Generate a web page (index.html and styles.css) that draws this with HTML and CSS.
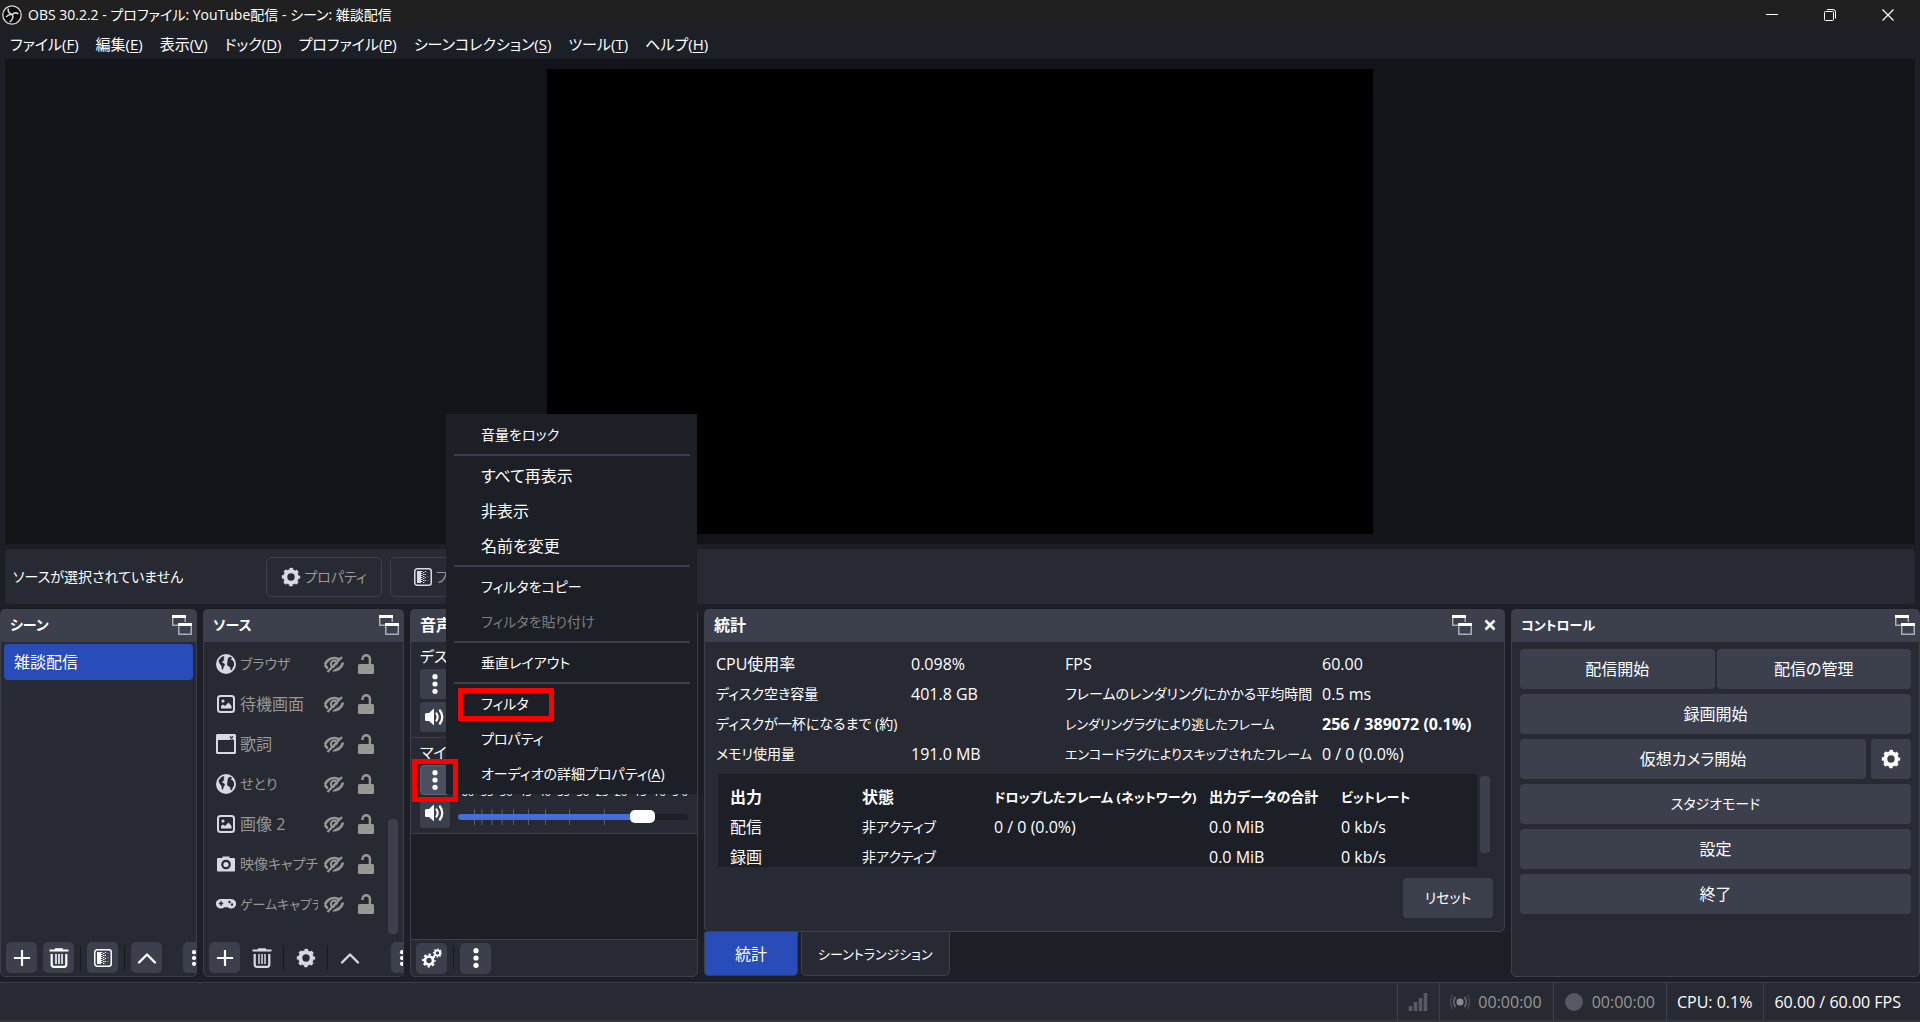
FILE: index.html
```html
<!DOCTYPE html>
<html lang="ja">
<head>
<meta charset="utf-8">
<title>OBS 30.2.2 - プロファイル: YouTube配信 - シーン: 雑談配信</title>
<link rel="stylesheet" href="styles.css">
</head>
<body>
<svg class="sprite" aria-hidden="true">
  <symbol id="popout" viewBox="0 0 20 20">
    <path d="M.75 3v7.250h5.250M13.250 3v4" fill="none" stroke="#a9acb4" stroke-width="1.500"/>
    <path d="M0 0h14v3H0zM6 8h14v3H6z" fill="#fff"/>
    <path d="M6.750 11v8.250h12.500V11" fill="none" stroke="#a9acb4" stroke-width="1.500"/>
  </symbol>
  <symbol id="gear" viewBox="0 0 20 20">
    <g fill="none" stroke="currentColor">
      <circle cx="10" cy="10" r="5.700" stroke-width="4"/>
      <circle cx="10" cy="10" r="8" stroke-width="2.400" stroke-dasharray="3.300 2.983" stroke-dashoffset="1.650"/>
    </g>
  </symbol>
  <symbol id="gears" viewBox="0 0 20 20">
    <g fill="none" stroke="currentColor">
      <circle cx="7" cy="12.500" r="4" stroke-width="2.700"/>
      <circle cx="7" cy="12.500" r="5.900" stroke-width="2" stroke-dasharray="2.400 2.234" stroke-dashoffset="1.200"/>
      <circle cx="15.500" cy="5" r="2.600" stroke-width="1.800"/>
      <circle cx="15.500" cy="5" r="3.900" stroke-width="1.300" stroke-dasharray="1.600 1.463" stroke-dashoffset=".8"/>
    </g>
  </symbol>
  <symbol id="filter" viewBox="0 0 20 20">
    <rect x="1.750" y="1.750" width="16.500" height="16.500" rx="2.500" fill="none" stroke="currentColor" stroke-width="1.500"/>
    <path d="M4 4h4v12H4z" fill="currentColor"/>
    <path d="M8.750 4v12M10.750 5v12" stroke="currentColor" stroke-width="1.500" stroke-dasharray="1 1" fill="none"/>
    <path d="M12.500 4v12" stroke="currentColor" stroke-width="1.200" stroke-dasharray="1 2" fill="none"/>
    <path d="M15 5v11" stroke="currentColor" stroke-width="1" stroke-dasharray="1 3" opacity=".5" fill="none"/>
  </symbol>
  <symbol id="globe" viewBox="0 0 20 20">
    <circle cx="10" cy="10" r="10" fill="currentColor"/>
    <path d="M2.500 6.500 5 3.500l2.500-1.500 1 1L7.500 5l1 1.200-2 1v1.500l1.700.8.8 1.500-1.500 2L7 16l-1.300-1.200-.2-2.800L3.500 9.500zM11.500 6l1-2.500 2-.8 1.500 1-1 1.800 1.500.8 1.500 2v3l-1 2-1 2.500-1.300.5-.7-3.300-1.500-.5-1.500-1.700.3-2z" fill="#272a33"/>
  </symbol>
  <symbol id="image" viewBox="0 0 20 20">
    <rect x="2" y="2" width="16" height="16" rx="2.500" fill="none" stroke="currentColor" stroke-width="2"/>
    <circle cx="7" cy="7" r="1.500" fill="currentColor"/>
    <path d="M5 14.500V12l2-1.500L9 12l3.500-3.500L15.500 12v2.500z" fill="currentColor"/>
  </symbol>
  <symbol id="window" viewBox="0 0 20 20">
    <path d="M1 0h18l1 1v18l-1 1H1l-1-1V1zM2 6v12h16V6z" fill="currentColor" fill-rule="evenodd"/>
    <path d="m14 2.500 3 3m0-3-3 3" stroke="#272a33" stroke-width="1.200"/>
  </symbol>
  <symbol id="camera" viewBox="0 0 20 20">
    <path d="M1 5q0-1 1-1h4.500V2.500h7V4H18q1 0 1 1v11.500q0 1-1 1H2q-1 0-1-1z" fill="currentColor"/>
    <circle cx="10" cy="10.500" r="3.700" fill="none" stroke="#272a33" stroke-width="2.200"/>
  </symbol>
  <symbol id="gamepad" viewBox="0 0 20 20">
    <path d="M5 5h10a5 4.800 0 1 1-3.300 8.300H8.300A5 4.800 0 1 1 5 5z" fill="currentColor"/>
    <path d="M5 7.300v4.400M2.800 9.500h4.400" stroke="#272a33" stroke-width="1.500"/>
    <path d="M13.500 8h.01M16 10.500h.01" stroke="#272a33" stroke-width="2.400" stroke-linecap="round"/>
  </symbol>
  <symbol id="hidden" viewBox="0 0 20 20">
    <path d="M1 10.500Q4 4 10 4q3.500 0 6 2M19 8.500Q17 16 8.500 16.500M1 10.500q.7 2.500 3 4" fill="none" stroke="currentColor" stroke-width="2.600"/>
    <circle cx="10" cy="10" r="3.200" fill="none" stroke="currentColor" stroke-width="2"/>
    <path d="M3.500 18 18 3" stroke="currentColor" stroke-width="2.400"/>
    <path d="M5.300 19.500 19.800 4.500" stroke="#272a33" stroke-width="1.400"/>
  </symbol>
  <symbol id="unlock" viewBox="0 0 16 20">
    <path d="M4.500 6V5a3.700 3.700 0 0 1 7.400 0v6" fill="none" stroke="currentColor" stroke-width="2.400"/>
    <rect y="10" width="16" height="10" rx="1.500" fill="currentColor"/>
  </symbol>
  <symbol id="plus" viewBox="0 0 20 20"><path d="M10 1v18M1 10h18" stroke="currentColor" stroke-width="2.400"/></symbol>
  <symbol id="trash" viewBox="0 0 20 20">
    <path d="M.5 2.500h19M6 1.200h8" stroke="currentColor" stroke-width="2"/>
    <path d="M2.700 6v10.500q0 2.300 2.300 2.300h10q2.300 0 2.300-2.300V6" fill="none" stroke="currentColor" stroke-width="2.200"/>
    <path d="M7 6v10M10 6v10M13 6v10" stroke="currentColor" stroke-width="1.500"/>
  </symbol>
  <symbol id="up" viewBox="0 0 20 20"><path d="m2 14.500 8-8 8 8" fill="none" stroke="currentColor" stroke-width="2.400" stroke-linecap="round" stroke-linejoin="round"/></symbol>
  <symbol id="dots" viewBox="0 0 20 20"><circle cx="10" cy="2.700" r="2.600" fill="currentColor"/><circle cx="10" cy="10" r="2.600" fill="currentColor"/><circle cx="10" cy="17.300" r="2.600" fill="currentColor"/></symbol>
  <symbol id="speaker" viewBox="0 0 20 20">
    <path d="M0 7.500Q0 6 1.500 6H4l5-4.500v17L4 14H1.500Q0 14 0 12.500z" fill="currentColor"/>
    <path d="M11.500 6.500q2.300 3.500 0 7M15 3.500q4.500 6.500 0 13" fill="none" stroke="currentColor" stroke-width="2.200" stroke-linecap="round"/>
  </symbol>
</svg>

<header class="titlebar">
  <svg class="logo" viewBox="0 0 20 20" aria-hidden="true">
    <circle cx="10" cy="10" r="9.200" fill="#0a0a0a" stroke="#d8d8d8" stroke-width="1.300"/>
    <path d="M6.200 3.500Q5.500 8.500 10.500 9.500M16.500 9q-3.500-2.500-6 .5 1.500 5-3 7.500M4 12q2.500-3 6.500-2.500" fill="none" stroke="#d8d8d8" stroke-width="1.500"/>
  </svg>
  <h1 class="title">OBS 30.2.2 - プロファイル: YouTube配信 - シーン: 雑談配信</h1>
  <div class="window-buttons">
    <button aria-label="最小化"><svg viewBox="0 0 12 12"><path d="M0 5.500h12" stroke="#fff"/></svg></button>
    <button aria-label="元に戻す"><svg viewBox="0 0 12 12"><rect x=".5" y="2.500" width="9" height="9" rx="1" fill="none" stroke="#fff"/><path d="M3 .5h6q2.500 0 2.500 2.500v6.500" fill="none" stroke="#fff"/></svg></button>
    <button aria-label="閉じる"><svg viewBox="0 0 12 12"><path d="m.5.5 11 11m0-11-11 11" stroke="#fff" stroke-width="1.200"/></svg></button>
  </div>
</header>

<nav class="menubar">
  <button>ファイル(<u>F</u>)</button>
  <button>編集(<u>E</u>)</button>
  <button>表示(<u>V</u>)</button>
  <button>ドック(<u>D</u>)</button>
  <button>プロファイル(<u>P</u>)</button>
  <button>シーンコレクション(<u>S</u>)</button>
  <button>ツール(<u>T</u>)</button>
  <button>ヘルプ(<u>H</u>)</button>
</nav>

<main class="workspace">
  <section class="preview" aria-label="プレビュー"><div class="canvas"></div></section>

  <section class="context-bar">
    <p class="context-label kana">ソースが選択されていません</p>
    <button class="outline-button kana" disabled><svg class="icon"><use href="#gear"/></svg>プロパティ</button>
    <button class="outline-button kana" disabled><svg class="icon"><use href="#filter"/></svg>フィルタ</button>
  </section>

  <div class="docks">
    <section class="dock">
      <header class="dock-header"><h2 class="kana">シーン</h2><button class="plain" aria-label="切り離す"><svg class="popout"><use href="#popout"/></svg></button></header>
      <div class="dock-body">
        <ul class="scene-list"><li class="selected">雑談配信</li></ul>
        <div class="toolbar">
          <button aria-label="追加"><svg class="glyph"><use href="#plus"/></svg></button>
          <button aria-label="削除"><svg class="icon"><use href="#trash"/></svg></button>
          <span class="divider"></span>
          <button aria-label="フィルタ"><svg class="icon"><use href="#filter"/></svg></button>
          <span class="divider"></span>
          <button aria-label="上へ"><svg class="icon"><use href="#up"/></svg></button>
          <button class="more" aria-label="その他"><svg class="dots"><use href="#dots"/></svg></button>
        </div>
      </div>
    </section>

    <section class="dock sources">
      <header class="dock-header"><h2 class="kana">ソース</h2><button class="plain" aria-label="切り離す"><svg class="popout"><use href="#popout"/></svg></button></header>
      <div class="dock-body">
        <div class="source-area">
          <ul class="source-list">
            <li><svg class="icon"><use href="#globe"/></svg><span class="kana">ブラウザ</span><svg class="state"><use href="#hidden"/></svg><svg class="lock"><use href="#unlock"/></svg></li>
            <li><svg class="icon"><use href="#image"/></svg><span>待機画面</span><svg class="state"><use href="#hidden"/></svg><svg class="lock"><use href="#unlock"/></svg></li>
            <li><svg class="icon"><use href="#window"/></svg><span>歌詞</span><svg class="state"><use href="#hidden"/></svg><svg class="lock"><use href="#unlock"/></svg></li>
            <li><svg class="icon"><use href="#globe"/></svg><span class="kana">せとり</span><svg class="state"><use href="#hidden"/></svg><svg class="lock"><use href="#unlock"/></svg></li>
            <li><svg class="icon"><use href="#image"/></svg><span>画像 2</span><svg class="state"><use href="#hidden"/></svg><svg class="lock"><use href="#unlock"/></svg></li>
            <li><svg class="icon"><use href="#camera"/></svg><span class="kana">映像キャプチ</span><svg class="state"><use href="#hidden"/></svg><svg class="lock"><use href="#unlock"/></svg></li>
            <li><svg class="icon"><use href="#gamepad"/></svg><span class="kana-small">ゲームキャプチ</span><svg class="state"><use href="#hidden"/></svg><svg class="lock"><use href="#unlock"/></svg></li>
          </ul>
          <div class="scrollbar source-scroll"></div>
        </div>
        <div class="toolbar">
          <button aria-label="追加"><svg class="glyph"><use href="#plus"/></svg></button>
          <button disabled aria-label="削除"><svg class="icon"><use href="#trash"/></svg></button>
          <span class="divider"></span>
          <button disabled aria-label="プロパティ"><svg class="icon"><use href="#gear"/></svg></button>
          <span class="divider"></span>
          <button disabled aria-label="上へ"><svg class="icon"><use href="#up"/></svg></button>
          <button class="more" aria-label="その他"><svg class="dots"><use href="#dots"/></svg></button>
        </div>
      </div>
    </section>

    <section class="dock mixer">
      <header class="dock-header"><h2>音声ミキサー</h2></header>
      <div class="dock-body">
        <div class="channel">
          <label for="vol-desktop">デスクトップ音声</label>
          <div class="channel-controls">
            <div class="channel-buttons">
              <button aria-label="メニュー"><svg class="icon"><use href="#dots"/></svg></button>
              <button aria-label="ミュート"><svg class="icon"><use href="#speaker"/></svg></button>
            </div>
            <div class="levels">
              <div class="scale"></div>
              <div class="fader"><input id="vol-desktop" type="range" min="0" max="100" value="84"></div>
            </div>
          </div>
        </div>
        <div class="channel">
          <label for="vol-mic">マイク</label>
          <div class="channel-controls">
            <div class="channel-buttons">
              <button class="active" aria-label="メニュー"><svg class="icon"><use href="#dots"/></svg></button>
              <button aria-label="ミュート"><svg class="icon"><use href="#speaker"/></svg></button>
            </div>
            <div class="levels">
              <div class="scale"><span>-60</span><span>-55</span><span>-50</span><span>-45</span><span>-40</span><span>-35</span><span>-30</span><span>-25</span><span>-20</span><span>-15</span><span>-10</span><span>-5</span><span>0</span></div>
              <div class="fader">
                <svg class="ticks" viewBox="0 0 230 16" preserveAspectRatio="none"><path d="M16.500 0v16M24 0v16M34 0v16M44 0v16M55.500 0v16M70.500 0v16M87.500 0v16M111.500 0v16M146.500 0v16" stroke="#5b5f6b"/></svg>
                <input id="vol-mic" type="range" min="0" max="100" value="84">
              </div>
            </div>
          </div>
        </div>
        <div class="mixer-space"></div>
        <div class="toolbar mixer-toolbar">
          <button aria-label="オーディオの詳細プロパティ"><svg class="icon"><use href="#gears"/></svg></button>
          <span class="divider"></span>
          <button aria-label="メニュー"><svg class="icon"><use href="#dots"/></svg></button>
        </div>
      </div>
      <div class="popup" role="menu">
        <button class="kana">音量をロック</button>
        <hr>
        <button>すべて再表示</button>
        <button>非表示</button>
        <button>名前を変更</button>
        <hr>
        <button class="kana">フィルタをコピー</button>
        <button class="kana" disabled>フィルタを貼り付け</button>
        <hr>
        <button class="kana">垂直レイアウト</button>
        <hr>
        <button class="kana marked">フィルタ</button>
        <button class="kana">プロパティ</button>
        <button class="kana">オーディオの詳細プロパティ(<u>A</u>)</button>
      </div>
      <div class="callout"></div>
    </section>

    <div class="tabbed">
      <section class="dock stats">
        <header class="dock-header"><h2>統計</h2>
          <button class="plain" aria-label="切り離す"><svg class="popout"><use href="#popout"/></svg></button>
          <button class="plain" aria-label="閉じる"><svg class="close" viewBox="0 0 12 12"><path d="m1.500 1.500 9 9m0-9-9 9" stroke="#fff" stroke-width="2.600"/></svg></button>
        </header>
        <div class="dock-body">
          <table class="figures">
            <colgroup><col class="f1"><col class="f2"><col class="f3"><col></colgroup>
            <tr><td>CPU使用率</td><td>0.098%</td><td>FPS</td><td>60.00</td></tr>
            <tr><td class="kana">ディスク空き容量</td><td>401.8 GB</td><td class="kana">フレームのレンダリングにかかる平均時間</td><td>0.5 ms</td></tr>
            <tr><td class="kana">ディスクが一杯になるまで (約)</td><td></td><td class="kana-small">レンダリングラグにより逃したフレーム</td><td><b>256 / 389072 (0.1%)</b></td></tr>
            <tr><td class="kana">メモリ使用量</td><td>191.0 MB</td><td class="kana-small">エンコードラグによりスキップされたフレーム</td><td>0 / 0 (0.0%)</td></tr>
          </table>
          <div class="outputs">
            <div class="outputs-view">
              <table>
                <colgroup><col class="o1"><col class="o1"><col class="o3"><col class="o1"><col></colgroup>
                <thead><tr><th>出力</th><th>状態</th><th class="kana-small">ドロップしたフレーム (ネットワーク)</th><th class="kana">出力データの合計</th><th class="kana-small">ビットレート</th></tr></thead>
                <tbody>
                  <tr><td>配信</td><td class="kana">非アクティブ</td><td>0 / 0 (0.0%)</td><td>0.0 MiB</td><td>0 kb/s</td></tr>
                  <tr><td>録画</td><td class="kana">非アクティブ</td><td></td><td>0.0 MiB</td><td>0 kb/s</td></tr>
                </tbody>
              </table>
            </div>
            <div class="scrollbar outputs-scroll"></div>
          </div>
          <button class="button reset kana">リセット</button>
        </div>
      </section>
      <div class="tabs" role="tablist">
        <button role="tab" aria-selected="true">統計</button>
        <button class="kana-small" role="tab" aria-selected="false">シーントランジション</button>
      </div>
    </div>

    <section class="dock">
      <header class="dock-header"><h2 class="kana-small">コントロール</h2><button class="plain" aria-label="切り離す"><svg class="popout"><use href="#popout"/></svg></button></header>
      <div class="dock-body controls">
        <div class="pair"><button class="button">配信開始</button><button class="button">配信の管理</button></div>
        <button class="button">録画開始</button>
        <div class="with-gear"><button class="button">仮想カメラ開始</button><button class="button gear-button" aria-label="仮想カメラの設定"><svg class="icon"><use href="#gear"/></svg></button></div>
        <button class="button kana">スタジオモード</button>
        <button class="button">設定</button>
        <button class="button">終了</button>
      </div>
    </section>
  </div>
</main>

<footer class="statusbar">
  <div><svg class="icon" viewBox="0 0 20 20"><path d="M2.500 19v-5M7.500 19v-9M12.500 19V6M17.500 19V1" stroke="#565963" stroke-width="3.600"/></svg></div>
  <div class="dim"><svg class="icon" viewBox="0 0 20 20"><circle cx="10" cy="10" r="3.500" fill="#8b8c90"/><path d="M5.500 5q-3.500 5 0 10M14.500 5q3.500 5 0 10" fill="none" stroke="#6a6c74" stroke-width="1.500"/><path d="M2.500 3q-4 7 0 14M17.500 3q4 7 0 14" fill="none" stroke="#454852" stroke-width="1.500"/></svg>00:00:00</div>
  <div class="dim"><svg class="icon" viewBox="0 0 20 20"><circle cx="10" cy="10" r="9" fill="#565963"/></svg>00:00:00</div>
  <div>CPU: 0.1%</div>
  <div class="fps">60.00 / 60.00 FPS</div>
</footer>
</body>
</html>
```
FILE: styles.css
```css
:root {
  --base: #1d1f26;
  --panel: #272a33;
  --raised: #3c404d;
  --line: #3c404d;
  --text: #fff;
  --muted: #999894;
  --icon: #d5d9e4;
  --accent: #284cb8;
}

*, *::after { box-sizing: border-box; }

body {
  margin: 0;
  min-height: 100vh;
  display: flex;
  flex-direction: column;
  background: var(--base);
  color: var(--text);
  font: 16px/24px "Open Sans", "Noto Sans CJK JP", sans-serif;
  font-feature-settings: "palt";
  white-space: nowrap;
  overflow-x: hidden;
}

h1, h2, p, ul { margin: 0; padding: 0; list-style: none; }
button { display: flex; align-items: center; justify-content: center; font: inherit; font-feature-settings: inherit; color: inherit; border: 0; padding: 0; background: none; }
h2 { font-size: 16px; line-height: 24px; }
svg { display: block; flex: none; }
u { text-underline-offset: 2px; }

.kana { font-size: 14px; }
.kana-small { font-size: 13px; }

.sprite { display: none; }
.icon { width: 20px; height: 20px; }
.glyph { width: 18px; height: 18px; }
.dots { width: 16px; height: 16px; }
.popout { width: 20px; height: 20px; }
.close { width: 12px; height: 12px; }

.titlebar { height: 29px; display: flex; align-items: center; padding: 0 3px 0 2px; gap: 6px; background: #202020; }
.logo { width: 20px; height: 20px; }
.title { flex: 1; font-size: 14px; font-weight: 400; }
.window-buttons { display: flex; }
.window-buttons button { width: 58px; height: 28px; }
.window-buttons svg { width: 12px; height: 12px; }

.menubar { height: 30px; display: flex; align-items: center; gap: 17px; padding-left: 10px; font-size: 15px; }

.workspace { flex: 1; display: flex; flex-direction: column; gap: 5px; }
.preview { flex: 1; margin: 0 5px; padding: 10px; display: flex; justify-content: center; align-items: center; background: #131419; }
.canvas { width: 43.7%; aspect-ratio: 16 / 9; background: #000; }

.context-bar { display: flex; align-items: center; gap: 8px; height: 55px; margin: 0 5px; padding-left: 8px; border-radius: 5px; background: var(--panel); }
.context-label { width: 245px; }
.outline-button { width: 116px; height: 40px; gap: 3px; border: 1px solid var(--line); border-radius: 5px; color: var(--muted); }
.outline-button svg { color: var(--icon); }

.docks {
  display: grid;
  grid-template-columns: minmax(0, 197fr) minmax(0, 201fr) minmax(0, 288fr) minmax(0, 801fr) minmax(0, 409fr);
  gap: 6px;
  height: 368px;
}
.dock { display: flex; flex-direction: column; min-height: 0; }
.dock-header { height: 32px; display: flex; align-items: center; gap: 12px; padding: 0 5px 0 10px; border-radius: 5px 5px 0 0; background: var(--raised); }
.dock-header h2 { flex: 1; }
.dock-body { flex: 1; min-height: 0; display: flex; flex-direction: column; border: 1px solid var(--line); border-radius: 0 0 5px 5px; background: var(--panel); }

.scene-list { flex: 1; padding: 2px 3px; }
.scene-list li { height: 36px; padding: 6px 10px; border-radius: 4px; background: var(--accent); }

.source-area { flex: 1; display: flex; min-height: 0; padding-right: 5px; }
.source-list { flex: 1; min-width: 0; padding: 2px 14px 0 12px; }
.source-list li { height: 40px; display: flex; align-items: center; color: var(--muted); }
.source-list .icon { color: var(--icon); margin-right: 4px; }
.source-list span { flex: 1; min-width: 0; overflow: hidden; margin-right: 6px; }
.state { width: 20px; height: 20px; margin-right: 14px; }
.lock { width: 16px; height: 20px; }
.scrollbar { width: 10px; border-radius: 4px; background: var(--raised); }
.source-scroll { height: 115px; align-self: flex-end; margin-bottom: 5px; }

.toolbar { display: flex; align-items: center; gap: 6px; height: 37px; padding: 0 5px; overflow: hidden; }
.toolbar button { width: 31px; height: 31px; flex: none; border-radius: 5px; background: var(--raised); }
.toolbar button:disabled { background: none; color: var(--icon); }
.toolbar .more { margin-left: 15px; width: 22px; }
.sources .more { margin-left: 20px; }
.divider { width: 1px; height: 24px; flex: none; background: #17181e; }

.mixer { position: relative; }
.channel { padding: 0 9px 5px; border-bottom: 1px solid var(--line); }
.channel label { display: block; height: 27px; line-height: 28px; font-size: 15px; }
.channel-controls { display: flex; gap: 8px; }
.channel-buttons { display: flex; flex-direction: column; gap: 3px; }
.channel-buttons button { width: 30px; height: 30px; border-radius: 4px; background: var(--raised); }
.channel-buttons .active { background: #4b5061; border: 1px solid #5b6273; }
.levels { flex: 1; display: flex; flex-direction: column; }
.scale { height: 33px; display: flex; align-items: flex-end; justify-content: space-between; font-size: 11px; line-height: 12px; }
.fader { position: relative; height: 30px; display: flex; align-items: center; }
.ticks { position: absolute; inset: 11px 0 auto; width: 100%; height: 16px; }
.fader input { -webkit-appearance: none; appearance: none; position: relative; width: 100%; height: 6px; margin: 7px 0 0; border-radius: 3px; background: linear-gradient(90deg, #476bd7 80%, #1d1f26 80%); }
.fader input::-webkit-slider-thumb { -webkit-appearance: none; width: 25px; height: 13px; border-radius: 5px; background: #fff; }
.mixer-space { flex: 1; background: var(--base); }
.mixer-toolbar { border-top: 1px solid var(--line); }

.popup { position: absolute; left: 36px; bottom: 183px; width: 251px; padding: 3px 7px 3px 8px; background: var(--base); }
.popup button { position: relative; width: 100%; height: 35px; padding-left: 27px; justify-content: flex-start; }
.popup button:disabled { color: #7d7d7d; }
.popup hr { height: 2px; margin: 2px 0; border: 0; background: var(--raised); }
.popup .marked::after { content: ""; position: absolute; left: 4px; top: 2px; width: 96px; height: 33px; border: 5px solid #f00; }
.callout { position: absolute; left: 2px; bottom: 175px; width: 46px; height: 43px; border: 5px solid #f00; }

.tabbed { display: flex; flex-direction: column; }
.stats { flex: 1; }
.stats .dock-header { padding-right: 9px; }
.stats .dock-body { padding: 7px 11px 13px; }
table { border-collapse: collapse; table-layout: fixed; width: 100%; }
td, th { height: 30px; padding: 0; text-align: left; }
.f1 { width: 195px; }
.f2 { width: 154px; }
.f3 { width: 257px; }
.outputs { display: flex; gap: 3px; margin: 5px 3px 0 2px; }
.outputs-view { flex: 1; height: 93px; padding: 8px 0 0 12px; overflow: hidden; background: var(--base); }
.o1 { width: 132px; }
.o3 { width: 215px; }
.outputs-scroll { height: 77px; margin-top: 2px; }
.button { height: 40px; border-radius: 4px; background: var(--raised); }
.reset { width: 90px; align-self: flex-end; margin-top: 11px; }

.tabs { display: flex; gap: 3px; }
.tabs button { height: 44px; margin-bottom: 1px; padding: 0 16px; border: 1px solid var(--line); border-top: 0; border-radius: 0 0 5px 5px; background: var(--panel); }
.tabs button[aria-selected="true"] { padding: 0 30px; background: var(--accent); }

.controls { gap: 5px; padding: 7px 8px; }
.pair { display: grid; grid-template-columns: 1fr 1fr; gap: 2px; }
.with-gear { display: grid; grid-template-columns: 1fr 40px; gap: 5px; }

.statusbar { display: flex; justify-content: flex-end; height: 40px; margin-top: 5px; border-top: 1px solid var(--line); border-bottom: 2px solid #34343a; background: var(--panel); }
.statusbar div { display: flex; align-items: center; gap: 8px; padding: 0 11px 0 10px; border-left: 1px solid var(--line); }
.statusbar .dim { color: var(--muted); }
.statusbar .fps { padding-right: 19px; }
```
